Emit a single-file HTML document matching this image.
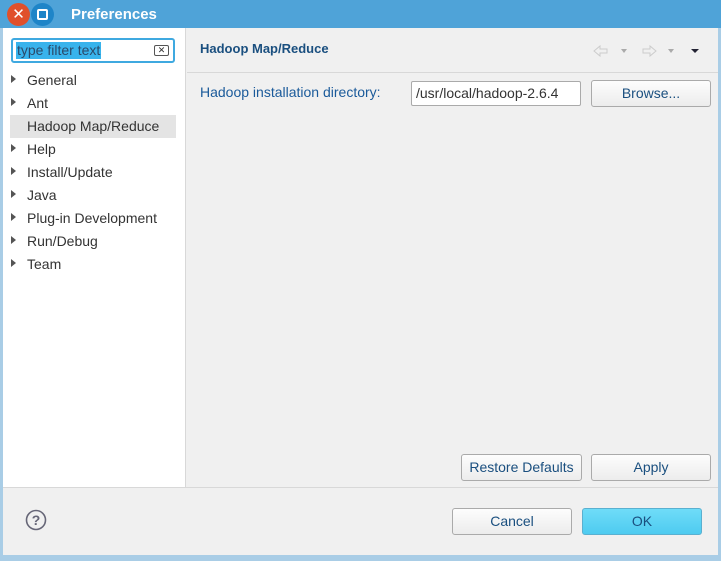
<!DOCTYPE html>
<html><head><style>
*{margin:0;padding:0;box-sizing:border-box}
body{width:721px;height:561px;overflow:hidden;background:#a9cde6;font-family:"Liberation Sans","DejaVu Sans",sans-serif;font-size:14px;position:relative}
.title{position:absolute;left:0;top:0;width:721px;height:28px;background:#4fa3d8;}
.title .t{position:absolute;left:71px;top:6px;color:#fff;font-weight:bold;font-size:15px}
.btnx{position:absolute;left:7px;top:3px;width:23px;height:23px;border-radius:50%;background:#e0502b;color:#fff;font-weight:bold;text-align:center;line-height:23px;font-size:15px}
.btnm{position:absolute;left:31px;top:3px;width:23px;height:23px;border-radius:50%;background:#1e85c8}
.btnm:after{content:"";position:absolute;left:6px;top:6px;width:11px;height:11px;border:2px solid #fff;border-radius:2px;box-sizing:border-box}
.win{position:absolute;left:3px;top:28px;width:715px;height:527px;background:#f0f0f0}
.left{position:absolute;left:0;top:0;width:183px;height:459px;background:#fff;border-right:1px solid #d8d8d8}
.filter{position:absolute;left:8px;top:10px;width:164px;height:25px;border:2px solid #3fa9e0;border-radius:3px;background:#fff}
.filter span{position:absolute;left:3px;top:2px;background:#38b3ec;color:#2a4a6a;font-size:14px;line-height:17px;padding:0 1px}
.filter i{position:absolute;right:4px;top:5px;width:15px;height:11px;border:1.5px solid #555;border-radius:2px;font-style:normal;font-size:9px;line-height:8px;text-align:center;color:#333;font-weight:bold}
.item{position:absolute;left:24px;font-size:14px;color:#333}
.tri{position:absolute;left:8px;width:0;height:0;border-left:5px solid #555;border-top:4px solid transparent;border-bottom:4px solid transparent}
.sel{position:absolute;left:7px;top:87px;width:166px;height:23px;background:#e4e4e4}
.hdr{position:absolute;left:197px;top:13px;font-weight:bold;color:#1a4f7f;font-size:13px}
.hline{position:absolute;left:184px;top:44px;width:531px;height:1px;background:#d8d8d8}
.lbl{position:absolute;left:197px;top:56px;color:#1a5a9a;font-size:14px}
.inp{position:absolute;left:408px;top:53px;width:170px;height:25px;border:1px solid #aaa;border-radius:2px;background:#fff;padding:3px 4px;color:#333;font-size:14px;white-space:nowrap;overflow:hidden}
.btn{position:absolute;border:1px solid #aaa;border-radius:3px;background:linear-gradient(#fdfdfd,#ececec);color:#1a4f7f;text-align:center;font-size:14px}
.bline{position:absolute;left:0;top:459px;width:715px;height:1px;background:#d8d8d8}
</style></head><body>
<div class="title"><div class="btnx">✕</div><div class="btnm"></div><div class="t">Preferences</div></div>
<div class="win">
<div class="left">
<div class="filter"><span>type filter text</span><i>✕</i></div>
<div class="sel"></div>
<div class="tri" style="top:47px"></div><div class="item" style="top:44px">General</div>
<div class="tri" style="top:70px"></div><div class="item" style="top:67px">Ant</div>
<div class="item" style="top:90px">Hadoop Map/Reduce</div>
<div class="tri" style="top:116px"></div><div class="item" style="top:113px">Help</div>
<div class="tri" style="top:139px"></div><div class="item" style="top:136px">Install/Update</div>
<div class="tri" style="top:162px"></div><div class="item" style="top:159px">Java</div>
<div class="tri" style="top:185px"></div><div class="item" style="top:182px">Plug-in Development</div>
<div class="tri" style="top:208px"></div><div class="item" style="top:205px">Run/Debug</div>
<div class="tri" style="top:231px"></div><div class="item" style="top:228px">Team</div>
</div>
<div class="hdr">Hadoop Map/Reduce</div>
<svg style="position:absolute;left:588px;top:16px" width="120" height="14">
<path d="M3 7 L9 2 V5 H16 V9 H9 V12 Z" fill="none" stroke="#ccc"/>
<path d="M30 5 L36 5 L33 9 Z" fill="#aaa"/>
<path d="M65 7 L59 2 V5 H52 V9 H59 V12 Z" fill="none" stroke="#ccc"/>
<path d="M77 5 L83 5 L80 9 Z" fill="#aaa"/>
<path d="M100 5 L108 5 L104 9 Z" fill="#223"/>
</svg>
<div class="hline"></div>
<div class="lbl">Hadoop installation directory:</div>
<div class="inp">/usr/local/hadoop-2.6.4</div>
<div class="btn" style="left:588px;top:52px;width:120px;height:27px;line-height:25px">Browse...</div>
<div class="btn" style="left:458px;top:426px;width:121px;height:27px;line-height:25px">Restore Defaults</div>
<div class="btn" style="left:588px;top:426px;width:120px;height:27px;line-height:25px">Apply</div>
<div class="bline"></div>
<svg style="position:absolute;left:22px;top:481px" width="22" height="22"><circle cx="11" cy="11" r="9.5" fill="none" stroke="#667" stroke-width="1.6"/><text x="11" y="16" text-anchor="middle" font-size="14" font-weight="bold" fill="#667" font-family="Liberation Sans">?</text></svg>
<div class="btn" style="left:449px;top:480px;width:120px;height:27px;line-height:25px">Cancel</div>
<div class="btn" style="left:579px;top:480px;width:120px;height:27px;line-height:25px;background:linear-gradient(#6fdcf8,#4ecbf0);border-color:#5ab0d0">OK</div>
</div>
</body></html>
